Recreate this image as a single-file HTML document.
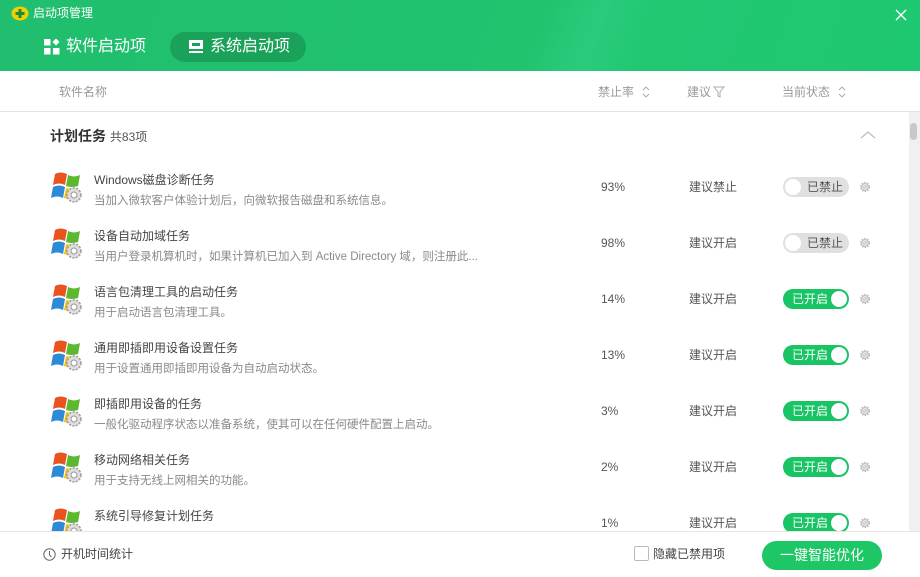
<!DOCTYPE html>
<html><head><meta charset="utf-8"><style>
*{margin:0;padding:0;box-sizing:border-box}
body{width:920px;height:577px;overflow:hidden;font-family:"Liberation Sans","Noto Sans CJK SC",sans-serif;background:#fff;position:relative}
.hdr{position:absolute;left:0;top:0;width:920px;height:71px;background:linear-gradient(110deg,#20be6e 0%,#21c36f 58%,#2acb7c 64%,#22c772 70%,#1ec870 100%)}
.a{position:absolute;white-space:nowrap;line-height:16px}
.t{font-size:12px;color:#444}
.d{font-size:11.5px;color:#8a8a8a}
.g{font-size:12px;color:#555}
.tog{position:absolute;width:66px;height:20px;border-radius:10px;font-size:12px;line-height:20px}
.off{background:#e0e0e0;color:#555}
.off i{position:absolute;left:2px;top:2px;width:16px;height:16px;border-radius:50%;background:#fff}
.off span{position:absolute;left:24px}
.on{background:#18c463;color:#fff}
.on i{position:absolute;right:2px;top:2px;width:16px;height:16px;border-radius:50%;background:#fff}
.on span{position:absolute;left:9px}
</style></head><body>
<div class="hdr"></div>
<svg class="a" style="left:11px;top:6px" width="18" height="15"><ellipse cx="9" cy="7.5" rx="8.5" ry="7" fill="#f0d000"/><rect x="7.5" y="3" width="3" height="9" fill="#1a8a3c"/><rect x="4.5" y="6" width="9" height="3" fill="#1a8a3c"/></svg>
<div class="a" style="left:33px;top:5px;font-size:12px;color:#fff">启动项管理</div>
<svg class="a" style="left:895px;top:9px" width="12" height="12"><path d="M1 1L11 11M11 1L1 11" stroke="#fff" stroke-width="1.4"/></svg>
<svg class="a" style="left:44px;top:39px" width="16" height="16"><rect x="0" y="0" width="6.5" height="6.5" fill="#fff"/><rect x="0" y="9" width="6.5" height="6.5" fill="#fff"/><rect x="9" y="9" width="6.5" height="6.5" fill="#fff"/><rect x="9.5" y="0.5" width="5" height="5" fill="#fff" transform="rotate(45 12 3)"/></svg>
<div class="a" style="left:66px;top:37px;font-size:16px;line-height:20px;color:#fff">软件启动项</div>
<div class="a" style="left:170px;top:32px;width:136px;height:30px;border-radius:15px;background:#1aa25a"></div>
<svg class="a" style="left:189px;top:40px" width="14" height="14"><rect x="0" y="0" width="14" height="9" fill="#fff"/><rect x="3" y="3" width="8" height="3" fill="#1aa25a"/><rect x="0" y="11" width="14" height="2" fill="#fff"/></svg>
<div class="a" style="left:210px;top:37px;font-size:16px;line-height:20px;color:#fff">系统启动项</div>

<div class="a" style="left:59px;top:84px;font-size:12px;color:#999">软件名称</div>
<div class="a" style="left:598px;top:84px;font-size:12px;color:#999">禁止率</div>
<svg class="a" style="left:641px;top:85px" width="10" height="14"><path d="M2 5L5 2L8 5M2 9L5 12L8 9" stroke="#aaa" fill="none"/></svg>
<div class="a" style="left:687px;top:84px;font-size:12px;color:#999">建议</div>
<svg class="a" style="left:713px;top:86px" width="12" height="12"><path d="M1 1H11L7 6V11L5 10V6Z" stroke="#aaa" fill="none"/></svg>
<div class="a" style="left:782px;top:84px;font-size:12px;color:#999">当前状态</div>
<svg class="a" style="left:837px;top:85px" width="10" height="14"><path d="M2 5L5 2L8 5M2 9L5 12L8 9" stroke="#aaa" fill="none"/></svg>
<div class="a" style="left:0;top:111px;width:920px;height:1px;background:#e2e2e2"></div>
<div class="a" style="left:909px;top:112px;width:11px;height:419px;background:#f0f0f0"></div>
<div class="a" style="left:910px;top:123px;width:7px;height:17px;border-radius:4px;background:#c8c8c8"></div>
<div class="a" style="left:50px;top:127px;font-size:14px;line-height:18px;font-weight:bold;color:#333">计划任务 <span style="font-size:12px;font-weight:normal;color:#555">共83项</span></div>
<svg class="a" style="left:860px;top:130px" width="16" height="10"><path d="M1 8L8 2L15 8" stroke="#aaa" fill="none"/></svg>

<div id="rows"></div>
<script>
var R=[["Windows磁盘诊断任务","当加入微软客户体验计划后，向微软报告磁盘和系统信息。","93%","建议禁止",0],
["设备自动加域任务","当用户登录机算机时，如果计算机已加入到 Active Directory 域，则注册此...","98%","建议开启",0],
["语言包清理工具的启动任务","用于启动语言包清理工具。","14%","建议开启",1],
["通用即插即用设备设置任务","用于设置通用即插即用设备为自动启动状态。","13%","建议开启",1],
["即插即用设备的任务","一般化驱动程序状态以准备系统，使其可以在任何硬件配置上启动。","3%","建议开启",1],
["移动网络相关任务","用于支持无线上网相关的功能。","2%","建议开启",1],
["系统引导修复计划任务","","1%","建议开启",1]];
var gear='<svg width="12" height="12" viewBox="0 0 12 12"><circle cx="6" cy="6" r="4.2" fill="none" stroke="#bbb" stroke-width="1.6" stroke-dasharray="1.6 1.1"/><circle cx="6" cy="6" r="3.2" fill="none" stroke="#bbb"/><circle cx="6" cy="6" r="1.3" fill="none" stroke="#bbb"/></svg>';
var h="";
R.forEach(function(r,i){var c=187+56*i;
h+='<svg class="a" style="left:50px;top:'+(c-17)+'px" width="34" height="34"><path d="M5 4Q10 1 17 4L15 15Q9 12 3 15Z" fill="#e8531f"/><path d="M18 5Q24 8 30 5L28 16Q22 18 16 16Z" fill="#5cb82f"/><path d="M3 17Q9 14 15 17L13 28Q7 25 1 28Z" fill="#2f8ad6"/><path d="M16 18Q22 20 27 18L25 28Q20 30 14 28Z" fill="#f5c011"/><circle cx="24" cy="25" r="7" fill="#ddd" stroke="#999" stroke-width="1.5" stroke-dasharray="2 1.5"/><circle cx="24" cy="25" r="3" fill="#fff" stroke="#999"/></svg>';
h+='<div class="a t" style="left:94px;top:'+(c-15)+'px">'+r[0]+'</div>';
if(r[1])h+='<div class="a d" style="left:94px;top:'+(c+6)+'px">'+r[1]+'</div>';
h+='<div class="a g" style="left:601px;top:'+(c-8)+'px">'+r[2]+'</div>';
h+='<div class="a g" style="left:689px;top:'+(c-8)+'px">'+r[3]+'</div>';
h+=r[4]?'<div class="tog on" style="left:783px;top:'+(c-10)+'px"><span>已开启</span><i></i></div>':'<div class="tog off" style="left:783px;top:'+(c-10)+'px"><i></i><span>已禁止</span></div>';
h+='<div class="a" style="left:859px;top:'+(c-6)+'px;line-height:0">'+gear+'</div>';});
document.getElementById("rows").innerHTML=h;
</script>
<div class="a" style="left:0;top:531px;width:920px;height:46px;background:#fff;border-top:1px solid #e6e6e6"></div>
<svg class="a" style="left:43px;top:548px" width="13" height="13"><circle cx="6.5" cy="6.5" r="5.7" fill="none" stroke="#666"/><path d="M6.5 3V7L8.5 9" stroke="#666" fill="none"/></svg>
<div class="a" style="left:61px;top:546px;font-size:12px;color:#444">开机时间统计</div>
<div class="a" style="left:634px;top:546px;width:15px;height:15px;border:1px solid #bbb;border-radius:2px;background:#fff"></div>
<div class="a" style="left:653px;top:546px;font-size:12px;color:#444">隐藏已禁用项</div>
<div class="a" style="left:762px;top:541px;width:120px;height:29px;border-radius:15px;background:#1ec766;color:#fff;font-size:14px;text-align:center;line-height:29px">一键智能优化</div>
</body></html>
